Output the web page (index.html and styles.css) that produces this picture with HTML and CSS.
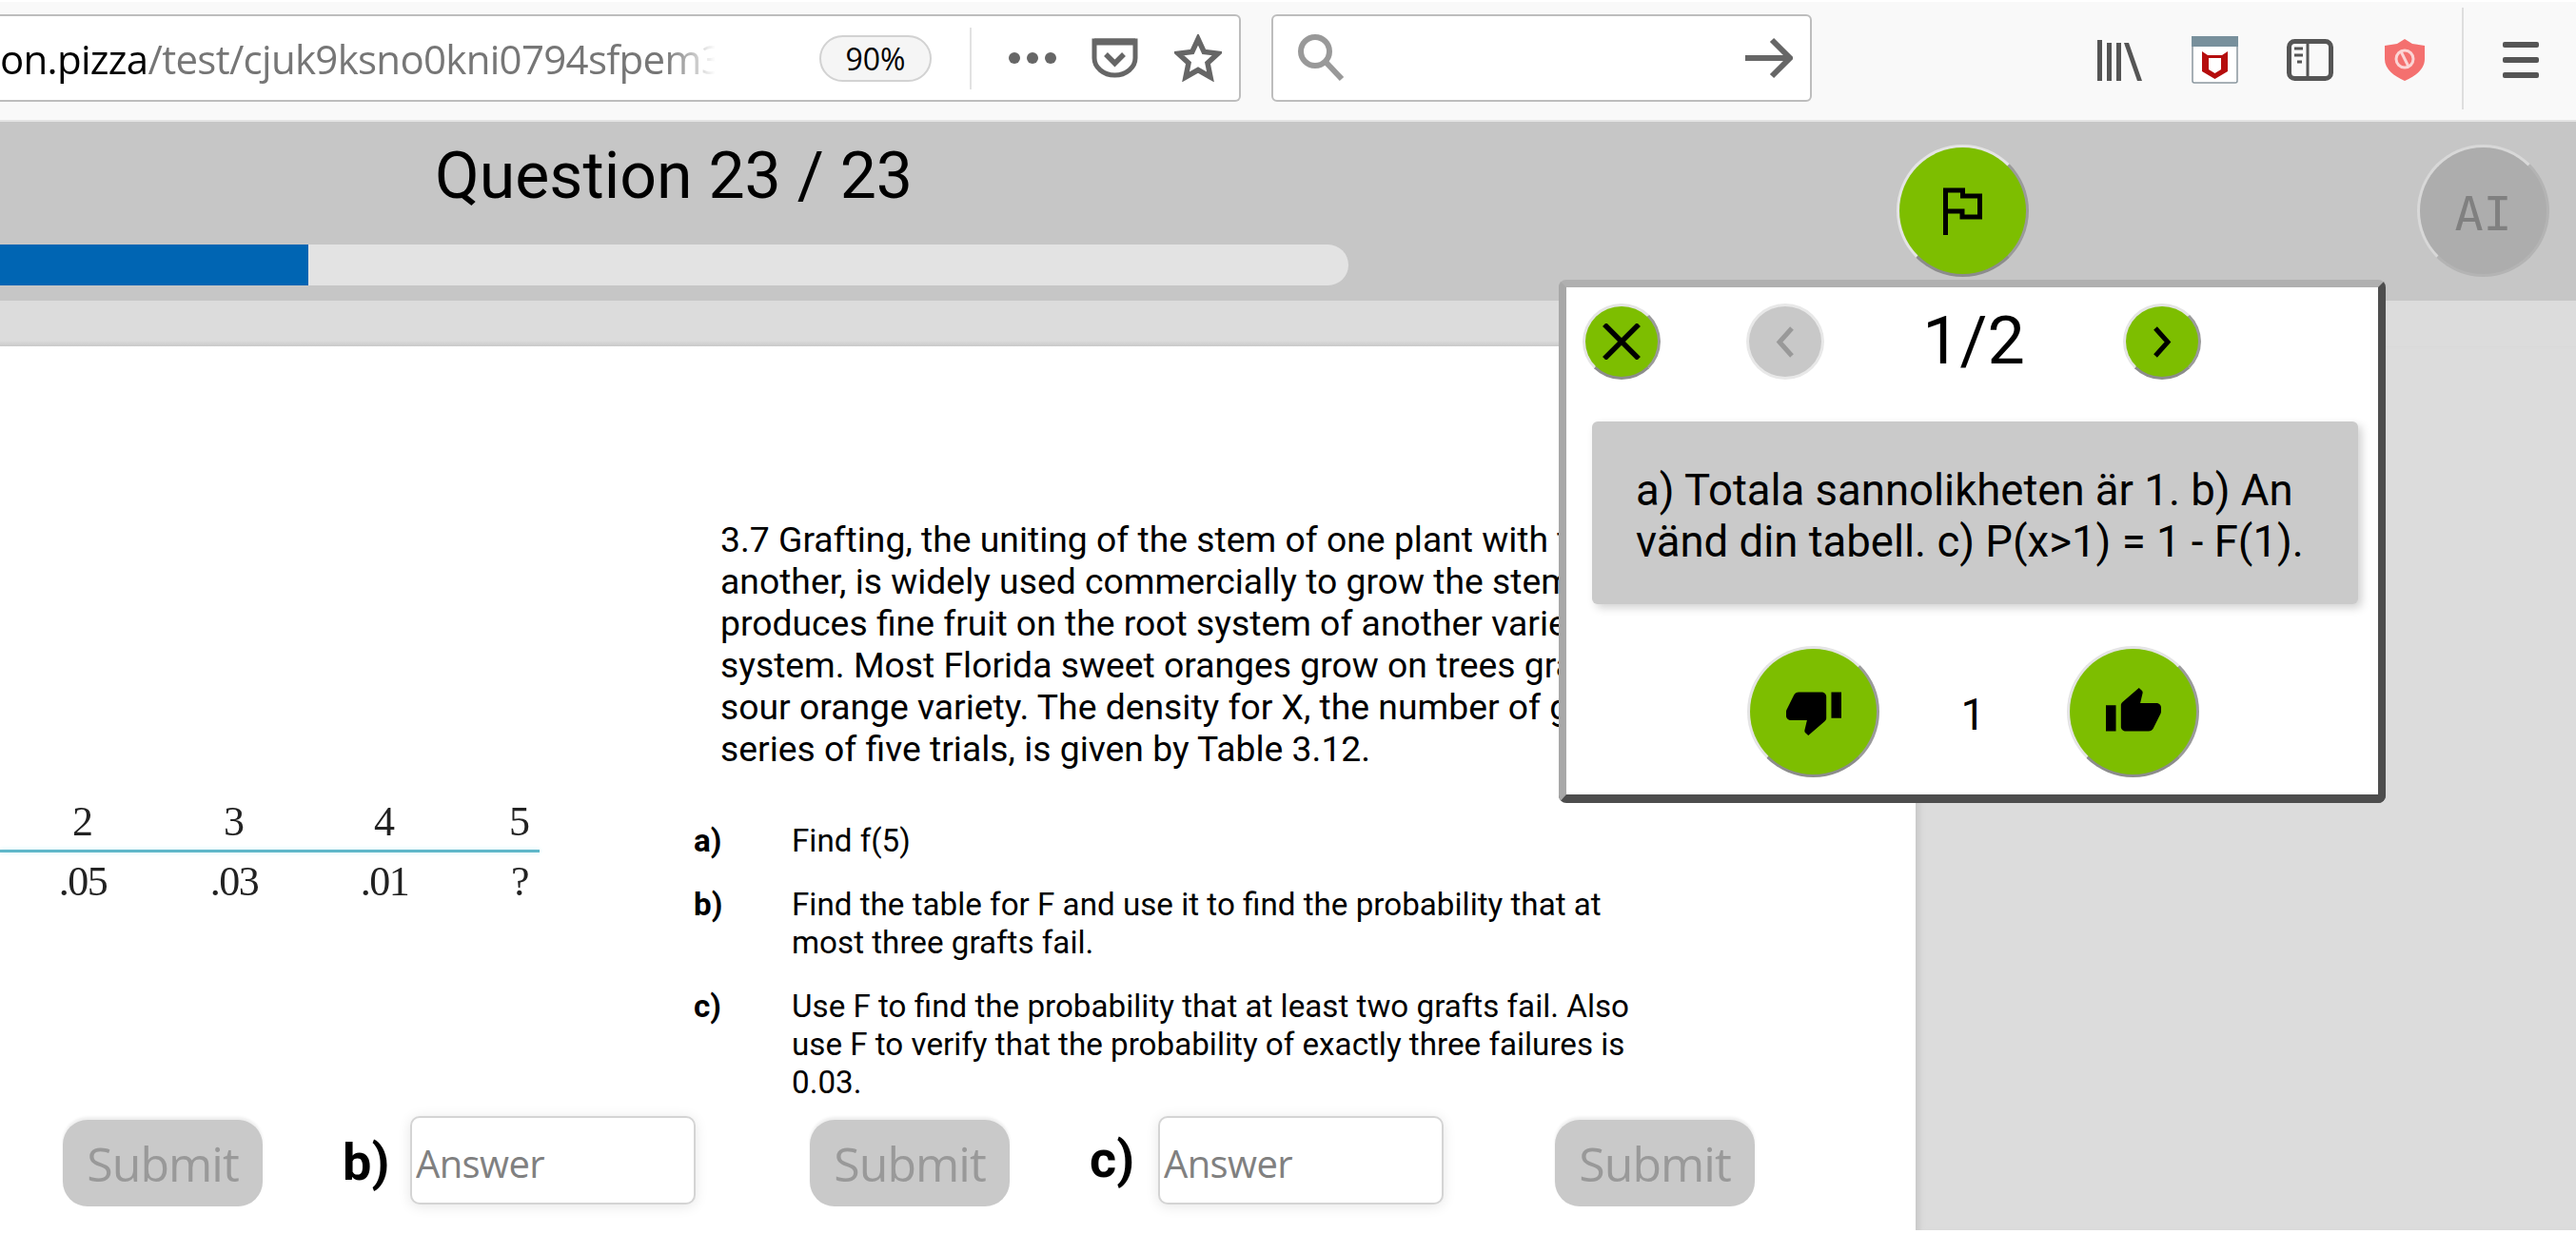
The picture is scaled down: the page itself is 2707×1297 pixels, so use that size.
FILE: index.html
```html
<!DOCTYPE html>
<html lang="en">
<head>
	<meta charset="UTF-8">
	<meta name="viewport" content="width=device-width, initial-scale=1.0">
	<title>Question 23 / 23</title>
	<link rel="stylesheet" href="styles.css">
</head>
<body>
	<!-- browser chrome -->
	<div class="toolbar">
		<div class="urlbar">
			<div class="url"><span class="url-host">on.pizza</span>/test/cjuk9ksno0kni0794sfpem3</div>
			<div class="zoom-pill">90%</div>
			<div class="url-sep"></div>
			<svg class="ico-dots" viewBox="0 0 50 12"><circle cx="6" cy="6" r="6"/><circle cx="25" cy="6" r="6"/><circle cx="44" cy="6" r="6"/></svg>
			<svg class="ico-pocket" viewBox="0 0 49 42"><path d="M3 3h43v18a21.500 18 0 0 1-43 0z"/><path d="M3 4h43" stroke-width="7"/><path d="M15 17l9.500 9.500L34 17" stroke-width="5.500"/></svg>
			<svg class="ico-star" viewBox="0 0 50 50"><path d="M25 5l6.200 13.500 14.800 1.700-11 10 3 14.800L25 37.500 12 45l3-14.800-11-10 14.800-1.700z"/></svg>
		</div>
		<div class="searchbar">
			<svg class="ico-search" viewBox="0 0 50 50"><ellipse cx="19" cy="18" rx="15" ry="15"/><path d="M30 29l17 18"/></svg>
			<svg class="ico-go" viewBox="0 0 50 44"><path d="M0 22h46"/><path d="M28 3l19 19-19 19"/></svg>
		</div>
		<div class="tool-icons">
			<div class="tool-cell">
				<svg width="47" height="43" viewBox="0 0 47 43" fill="#555"><rect x="0" y="0" width="5" height="43"/><rect x="10" y="3" width="5" height="40"/><rect x="20" y="3" width="5" height="40"/><path d="M28 3h5l14 40h-5z"/></svg>
			</div>
			<div class="tool-cell">
				<svg width="49" height="50" viewBox="0 0 49 50"><rect x="1" y="1" width="47" height="48" rx="2" fill="#fff" stroke="#8a979e" stroke-width="1.500"/><rect x="0" y="0" width="49" height="11" fill="#78909c"/><path d="M11 16l6 4h15l6-4v21l-13.500 8L11 37z" fill="#b50d0d"/><path d="M18 23h13v12l-6.500 4-6.500-4z" fill="#fff"/></svg>
			</div>
			<div class="tool-cell">
				<svg width="49" height="44" viewBox="0 0 49 44"><rect x="2.500" y="2.500" width="44" height="39" rx="6" fill="none" stroke="#555" stroke-width="5"/><path d="M22 3v38" stroke="#555" stroke-width="3"/><path d="M8 10h9M8 17h9M11 24h5" stroke="#555" stroke-width="3"/></svg>
			</div>
			<div class="tool-cell">
				<svg width="44" height="44" viewBox="0 0 44 44"><path d="M22 0l8 5 13 2v14c0 11-10 18-21 23C11 39 1 32 1 21V7l13-2z" fill="#f4706f"/><circle cx="22" cy="21" r="9" fill="none" stroke="#fbd5d5" stroke-width="3"/><path d="M18 13l8 16" stroke="#fbd5d5" stroke-width="3"/></svg>
			</div>
		</div>
		<div class="tool-sep"></div>
		<svg class="ico-menu" viewBox="0 0 38 38" fill="#555"><rect width="38" height="6" y="0" rx="2"/><rect width="38" height="6" y="16" rx="2"/><rect width="38" height="6" y="32" rx="2"/></svg>
	</div>

	<!-- quiz header -->
	<header class="quiz-head">
		<div class="head-left">
			<h1 class="title">Question 23 / 23</h1>
			<div class="progress"><div class="progress-fill" style="width: 324px"></div></div>
		</div>
		<button class="round round-big green flag-btn">
			<svg width="41" height="50" viewBox="0 0 41 50" fill="none" stroke="#000" stroke-width="5"><path d="M2.500 50V3h18v6h18v22H20v-6H2.500"/></svg>
		</button>
		<button class="round round-big grey ai-btn">AI</button>
	</header>
	<div class="band"></div>

	<main class="content">
		<section class="sheet">
			<div class="question">
				<div class="dist-table">
					<div class="dist-row dist-top"><span>2</span><span>3</span><span>4</span><span>5</span></div>
					<div class="dist-line"></div>
					<div class="dist-row dist-low"><span>.05</span><span>.03</span><span>.01</span><span>?</span></div>
				</div>
				<div class="text">
					<p class="intro">3.7 Grafting, the uniting of the stem of one plant with that of<br>another, is widely used commercially to grow the stem of one variety that<br>produces fine fruit on the root system of another variety with a hardy root<br>system. Most Florida sweet oranges grow on trees grafted to the root of a<br>sour orange variety. The density for X, the number of grafts that fail in a<br>series of five trials, is given by Table 3.12.</p>
					<ol class="parts">
						<li><b>a)</b><span>Find f(5)</span></li>
						<li><b>b)</b><span>Find the table for F and use it to find the probability that at most three grafts fail.</span></li>
						<li><b>c)</b><span>Use F to find the probability that at least two grafts fail. Also use F to verify that the probability of exactly three failures is 0.03.</span></li>
					</ol>
				</div>
			</div>
			<div class="answers">
				<button class="submit">Submit</button>
				<b class="ans-label label-b">b)</b>
				<input class="answer" placeholder="Answer">
				<button class="submit submit-mid">Submit</button>
				<b class="ans-label label-c">c)</b>
				<input class="answer" placeholder="Answer">
				<button class="submit submit-last">Submit</button>
			</div>
		</section>
		<aside class="side"></aside>
	</main>

	<!-- hint popup -->
	<div class="popup">
		<div class="popup-nav">
			<button class="round round-small green">
				<svg width="40" height="38" viewBox="0 0 40 38" fill="none" stroke="#000" stroke-width="5.500"><path d="M2 1l36 36M38 1L2 37"/></svg>
			</button>
			<button class="round round-small grey prev-btn">
				<svg width="20" height="33" viewBox="0 0 20 33" fill="none" stroke="#999" stroke-width="5"><path d="M17 2L4 16.500 17 31"/></svg>
			</button>
			<div class="page-count">1/2</div>
			<button class="round round-small green next-btn">
				<svg width="20" height="33" viewBox="0 0 20 33" fill="none" stroke="#000" stroke-width="5"><path d="M3 2l13 14.500L3 31"/></svg>
			</button>
		</div>
		<div class="hint">a) Totala sannolikheten är 1. b) An<br>vänd din tabell. c) P(x&gt;1) = 1 - F(1).</div>
		<div class="votes">
			<button class="round round-vote green">
				<svg width="58" height="50" viewBox="1 1 22 22" preserveAspectRatio="none"><path d="M15 3H6c-.83 0-1.540.5-1.840 1.220l-3.020 7.050c-.09.23-.14.47-.14.73v2c0 1.100.9 2 2 2h6.310l-.95 4.570-.03.32c0 .41.17.79.44 1.060L9.830 23l6.590-6.590c.36-.36.58-.86.58-1.410V5c0-1.100-.9-2-2-2zm4 0v12h4V3h-4z"/></svg>
			</button>
			<span class="vote-count">1</span>
			<button class="round round-vote green">
				<svg width="58" height="50" viewBox="1 1 22 22" preserveAspectRatio="none"><path d="M1 21h4V9H1v12zm22-11c0-1.100-.9-2-2-2h-6.310l.95-4.570.03-.32c0-.41-.17-.79-.44-1.060L14.170 1 7.590 7.590C7.220 7.950 7 8.450 7 9v10c0 1.100.9 2 2 2h9c.83 0 1.540-.5 1.840-1.220l3.020-7.050c.09-.23.14-.47.14-.73v-2z"/></svg>
			</button>
		</div>
	</div>
</body>
</html>
```

FILE: styles.css
```css
*, *:before, *:after {
	box-sizing: border-box;
}
html, body {
	margin: 0;
	height: 100%;
}
body {
	width: 2707px;
	height: 1297px;
	overflow: hidden;
	position: relative;
	background: white;
	font-family: Roboto, sans-serif;
	color: black;
}
button {
	font-family: inherit;
	padding: 0;
}

/* browser chrome */
.toolbar {
	height: 128px;
	padding-top: 15px;
	background: #f9f9f9;
	border-top: 2px solid white;
	border-bottom: 2px solid #e4e4e4;
	display: flex;
	align-items: flex-start;
}
.urlbar {
	width: 1304px;
	height: 92px;
	margin-top: -2px;
	background: white;
	border: 2px solid #bdbdbd;
	border-left: 0;
	border-radius: 0 6px 6px 0;
	display: flex;
	align-items: center;
}
.url {
	width: 752px;
	overflow: hidden;
	white-space: nowrap;
	font-family: "Open Sans", sans-serif;
	font-size: 42px;
	letter-spacing: -0.7px;
	color: #767676;
	-webkit-mask-image: linear-gradient(to right, black 93%, transparent);
	mask-image: linear-gradient(to right, black 93%, transparent);
}
.url-host {
	color: black;
}
.zoom-pill {
	width: 118px;
	height: 49px;
	margin-left: 109px;
	border: 2px solid #d2d2d2;
	border-radius: 25px;
	background: #f5f5f5;
	font-family: "Open Sans", sans-serif;
	font-size: 32px;
	line-height: 45px;
	text-align: center;
}
.url-sep {
	width: 2px;
	height: 65px;
	margin-left: 40px;
	background: #e2e2e2;
}
.ico-dots {
	width: 50px;
	height: 12px;
	margin-left: 39px;
	fill: #666;
}
.ico-pocket {
	width: 49px;
	height: 42px;
	margin-left: 37px;
	fill: none;
	stroke: #666;
	stroke-width: 5;
}
.ico-star {
	width: 50px;
	height: 50px;
	margin-left: 38px;
	fill: none;
	stroke: #666;
	stroke-width: 5.500;
}
.searchbar {
	width: 568px;
	height: 92px;
	margin-top: -2px;
	margin-left: 32px;
	background: white;
	border: 2px solid #bdbdbd;
	border-radius: 6px;
	padding: 0 18px 0 25px;
	display: flex;
	align-items: center;
	justify-content: space-between;
}
.ico-search {
	width: 50px;
	height: 50px;
	fill: none;
	stroke: #999;
	stroke-width: 6;
}
.ico-go {
	width: 50px;
	height: 44px;
	fill: none;
	stroke: #666;
	stroke-width: 6;
}
.tool-icons {
	display: flex;
	margin-left: 273px;
	margin-top: 21px;
}
.tool-cell {
	width: 100px;
	height: 50px;
	display: flex;
	align-items: center;
	justify-content: center;
}
.tool-sep {
	width: 2px;
	height: 107px;
	margin-top: -9px;
	margin-left: 10px;
	background: #dedede;
}
.ico-menu {
	width: 38px;
	height: 38px;
	margin-left: 41px;
	margin-top: 27px;
}

/* quiz header */
.quiz-head {
	height: 188px;
	background: #c6c6c6;
	display: flex;
	align-items: flex-start;
}
.head-left {
	width: 1417px;
}
.title {
	margin: 0;
	height: 129px;
	padding: 17px 0 0 457px;
	font-size: 68px;
	font-weight: 400;
	line-height: 80px;
}
.progress {
	height: 43px;
	background: #e3e3e3;
	border-radius: 0 22px 22px 0;
	overflow: hidden;
}
.progress-fill {
	height: 100%;
	background: #0065b3;
}
.round {
	border-radius: 50%;
	border: 3px solid;
	border-color: #e4e4e4 #9a9a9a #8c8c8c #e4e4e4;
	display: flex;
	align-items: center;
	justify-content: center;
}
.green {
	background: #7dbe00;
}
.grey {
	background: #adadad;
}
.round-big {
	width: 139px;
	height: 139px;
	margin-top: 24px;
}
.flag-btn {
	margin-left: 576px;
}
.ai-btn {
	margin-left: 408px;
	padding-top: 6px;
	border-color: #d8d8d8 #b4b4b4 #b4b4b4 #d8d8d8;
	font-family: "DejaVu Sans Mono", monospace;
	font-size: 50px;
	color: #808080;
}
.band {
	height: 48px;
	background: linear-gradient(#dcdcdc 42px, #c9c9c9) 0 0 / 2013px 100% no-repeat, #dcdcdc;
}

/* question sheet */
.content {
	height: 931px;
	display: flex;
}
.sheet {
	width: 2013px;
	background: white;
	display: flex;
	flex-direction: column;
}
.side {
	width: 694px;
	height: 929px;
	background: #dcdcdc;
	box-shadow: inset 8px 0 6px -4px #c8c8c8;
}
.question {
	height: 809px;
	display: flex;
}
.dist-table {
	width: 729px;
	padding-top: 474px;
	font-family: "Liberation Serif", serif;
	font-size: 44px;
	color: #222;
	filter: blur(0.5px);
}
.dist-row {
	width: 604px;
	display: grid;
	grid-template-columns: 174px 144px 172px 112px;
	justify-items: center;
	line-height: 52px;
}
.dist-top {
	height: 55px;
}
.dist-line {
	width: 567px;
	height: 3px;
	margin-bottom: 5px;
	background: #5fb7c9;
	box-shadow: 0 0 5px #c5eef5;
}
.dist-low {
	letter-spacing: -1.5px;
}
.text {
	padding-top: 181px;
}
.intro {
	margin: 0 0 0 28px;
	white-space: nowrap;
	font-size: 37.300px;
	line-height: 44px;
}
.parts {
	list-style: none;
	margin: 55px 0 0;
	padding: 0;
	width: 1010px;
	font-size: 33.200px;
	line-height: 40px;
}
.parts li {
	display: flex;
	margin-bottom: 27px;
}
.parts b {
	width: 103px;
	flex: none;
}
.parts span {
	width: 900px;
}
.answers {
	display: flex;
	align-items: flex-start;
	padding-left: 66px;
}
.submit {
	width: 210px;
	height: 91px;
	margin-top: 4px;
	border: 0;
	border-radius: 26px;
	background: #c9c9c9;
	box-shadow: 0 -3px 3px #eee;
	font-family: "Open Sans", sans-serif;
	font-size: 50px;
	letter-spacing: -1px;
	color: #999;
}
.submit-mid {
	margin-left: 120px;
}
.submit-last {
	margin-left: 117px;
}
.ans-label {
	font-size: 54px;
	line-height: 90px;
	width: 70px;
}
.label-b {
	margin-left: 84px;
	padding-top: 4px;
	width: 71px;
}
.label-c {
	margin-left: 84px;
	padding-top: 0;
	line-height: 92px;
	width: 72px;
}
.answer {
	width: 300px;
	height: 93px;
	padding: 6px 4px 0;
	border: 2px solid #d4d4d4;
	border-radius: 10px;
	box-shadow: 0 2px 14px rgba(0, 0, 0, 0.1);
	background: white;
	font-family: "Open Sans", sans-serif;
	font-size: 40px;
	letter-spacing: -0.6px;
}
.answer::placeholder {
	color: #808080;
	opacity: 1;
}

/* hint popup, sits over the sheet */
.popup {
	position: absolute;
	left: 1638px;
	top: 294px;
	width: 869px;
	height: 550px;
	background: white;
	border: 8px solid;
	border-color: #b0b0b0 #4d4d4d #4d4d4d #a8a8a8;
	border-bottom-width: 9px;
	border-radius: 8px;
	padding: 17px 20px 0 17px;
}
.popup-nav {
	display: flex;
	align-items: center;
	height: 80px;
}
.round-small {
	width: 82px;
	height: 80px;
}
.prev-btn {
	margin-left: 90px;
	background: #c8c8c8;
	border-color: #e8e8e8;
}
.page-count {
	width: 314px;
	margin-top: -2px;
	font-size: 70px;
	text-align: center;
}
.hint {
	width: 805px;
	height: 192px;
	margin: 44px 0 0 10px;
	padding: 46px 0 0 46px;
	background: #cacaca;
	border-radius: 6px;
	box-shadow: 4px 4px 10px rgba(0, 0, 0, 0.18);
	font-size: 45.500px;
	line-height: 54px;
	white-space: nowrap;
}
.votes {
	display: flex;
	align-items: center;
	margin: 44px 0 0 173px;
}
.round-vote {
	width: 139px;
	height: 138px;
}
.vote-count {
	width: 197px;
	padding-top: 6px;
	font-size: 46px;
	text-align: center;
}
```
